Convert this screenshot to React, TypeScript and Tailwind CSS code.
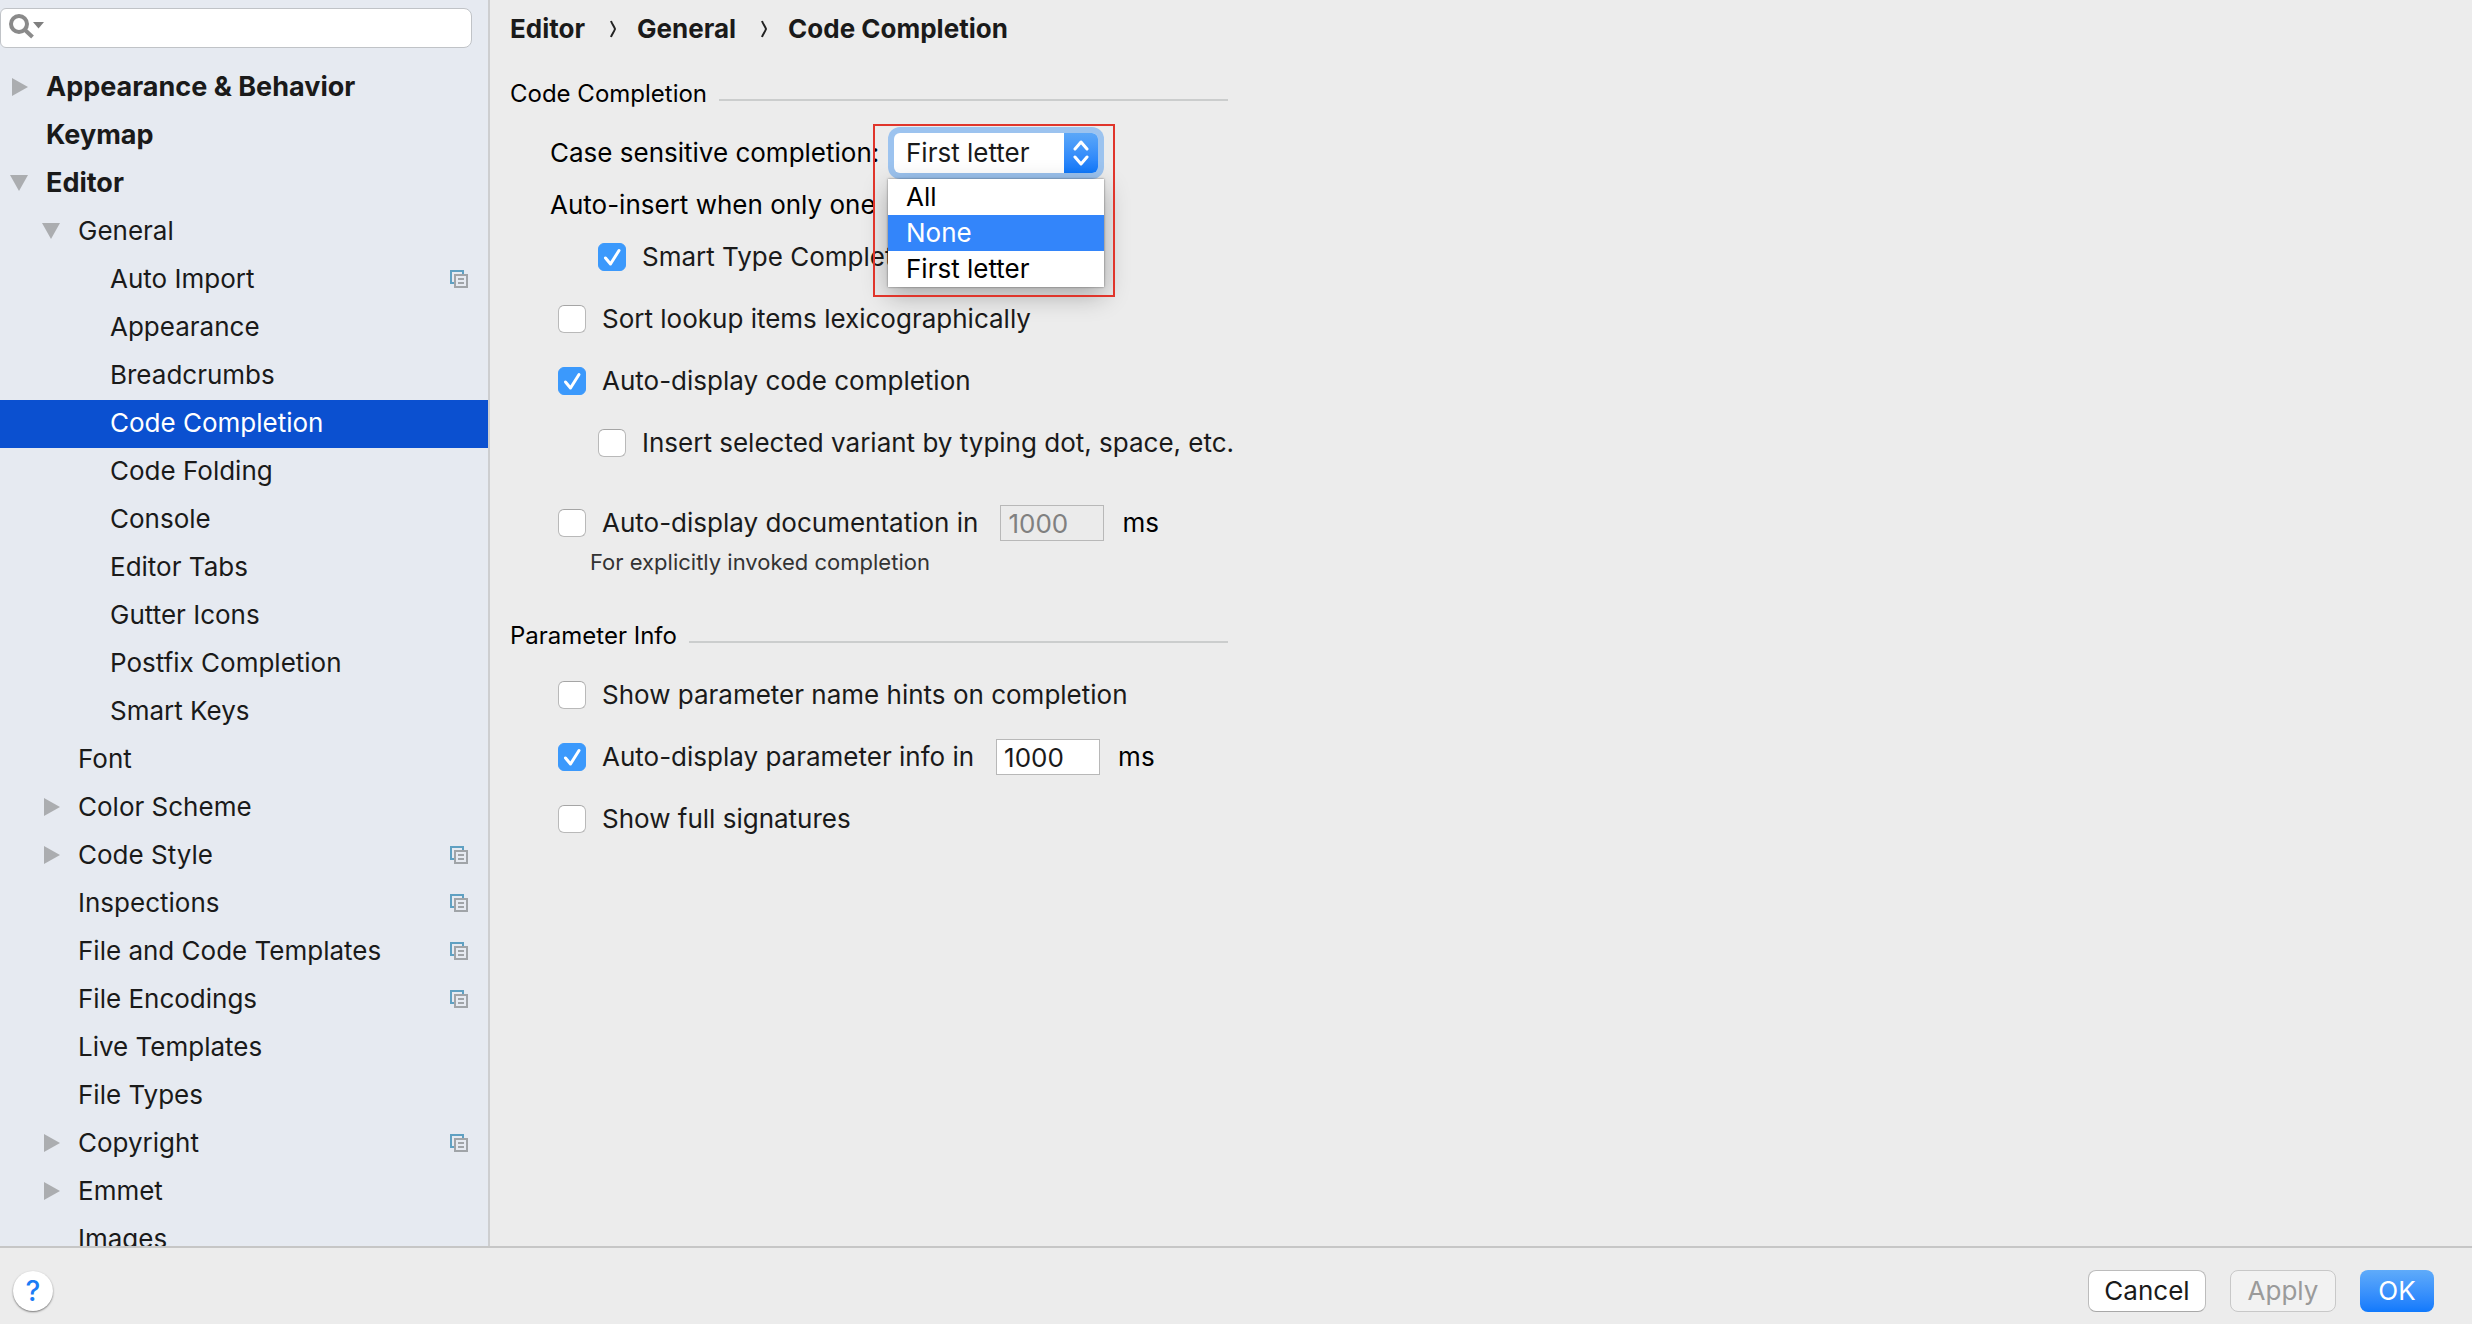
import { useState } from 'react'

type Item = {
  label: string
  level: 0 | 1 | 2
  arrow?: 'open' | 'closed'
  project?: boolean
}

const items: Item[] = [
  { label: 'Appearance & Behavior', level: 0, arrow: 'closed' },
  { label: 'Keymap', level: 0 },
  { label: 'Editor', level: 0, arrow: 'open' },
  { label: 'General', level: 1, arrow: 'open' },
  { label: 'Auto Import', level: 2, project: true },
  { label: 'Appearance', level: 2 },
  { label: 'Breadcrumbs', level: 2 },
  { label: 'Code Completion', level: 2 },
  { label: 'Code Folding', level: 2 },
  { label: 'Console', level: 2 },
  { label: 'Editor Tabs', level: 2 },
  { label: 'Gutter Icons', level: 2 },
  { label: 'Postfix Completion', level: 2 },
  { label: 'Smart Keys', level: 2 },
  { label: 'Font', level: 1 },
  { label: 'Color Scheme', level: 1, arrow: 'closed' },
  { label: 'Code Style', level: 1, arrow: 'closed', project: true },
  { label: 'Inspections', level: 1, project: true },
  { label: 'File and Code Templates', level: 1, project: true },
  { label: 'File Encodings', level: 1, project: true },
  { label: 'Live Templates', level: 1 },
  { label: 'File Types', level: 1 },
  { label: 'Copyright', level: 1, arrow: 'closed', project: true },
  { label: 'Emmet', level: 1, arrow: 'closed' },
  { label: 'Images', level: 1 },
]

const indents = ['pl-2.5 text-[27px] font-bold', 'pl-[42px]', 'pl-[74px]']

const caseOptions = ['All', 'None', 'First letter']

export default function App() {
  return (
    <div className="flex h-screen flex-col bg-[#ececec] font-['Inter',sans-serif] text-[26px] leading-8 text-[#1a1a1a]">
      <div className="flex min-h-0 flex-1">
        <Sidebar />
        <main className="min-w-0 flex-1 overflow-hidden pl-5">
          <Breadcrumbs path={['Editor', 'General', 'Code Completion']} />

          <SectionTitle title="Code Completion" />
          <div className="pt-[15px] pl-10">
            <CaseSelect />
            <div className="flex h-[52px] items-center whitespace-nowrap text-black">Auto-insert when only one</div>
            <div className="flex h-[52px] items-center pl-12">
              <Check id="smart" label="Smart Type Completion" checked />
            </div>
            <div className="pt-[5px] pl-2">
              <Row><Check id="sort" label="Sort lookup items lexicographically" /></Row>
              <Row><Check id="auto-code" label="Auto-display code completion" checked /></Row>
              <div className="pl-10">
                <Row><Check id="insert" label="Insert selected variant by typing dot, space, etc." /></Row>
              </div>
              <div className="pt-[18px]">
                <Row>
                  <Check id="auto-doc" label="Auto-display documentation in" />
                  <Delay label="Documentation delay" disabled />
                </Row>
              </div>
              <p className="-mt-2 pl-8 text-[22px] leading-8 text-[#333]">For explicitly invoked completion</p>
            </div>
          </div>

          <div className="pt-[22px]">
            <SectionTitle title="Parameter Info" />
          </div>
          <div className="pt-2.5 pl-12">
            <Row><Check id="hints" label="Show parameter name hints on completion" /></Row>
            <Row>
              <Check id="auto-param" label="Auto-display parameter info in" checked />
              <Delay label="Parameter info delay" />
            </Row>
            <Row><Check id="full" label="Show full signatures" /></Row>
          </div>
        </main>
      </div>
      <Footer />
    </div>
  )
}

function Sidebar() {
  return (
    <aside className="flex w-[490px] shrink-0 flex-col border-r-2 border-[#cdced0] bg-[#e6eaf1]">
      <div className="pt-2 pr-4 pb-4">
        <div className="flex h-10 items-center rounded-r-lg rounded-l-md border border-[#c0c3c7] bg-white pl-[7px]">
          <SearchIcon className="h-7 w-10 shrink-0" />
          <input type="text" aria-label="Search settings" className="min-w-0 flex-1 bg-transparent outline-none" />
        </div>
      </div>
      <nav className="min-h-0 flex-1 overflow-hidden">
        <ul>
          {items.map((item) => (
            <li key={item.label + item.level}>
              <a
                href="#"
                className={`flex h-12 items-center pr-5 pb-0.5 ${indents[item.level]} ${
                  item.label === 'Code Completion' ? 'bg-[#0b50d0] text-white' : ''
                }`}
              >
                <span className="w-9 shrink-0">
                  {item.arrow && <Arrow open={item.arrow === 'open'} />}
                </span>
                <span className="flex-1 whitespace-nowrap">{item.label}</span>
                {item.project && <ProjectIcon className="size-[18px]" />}
              </a>
            </li>
          ))}
        </ul>
      </nav>
    </aside>
  )
}

function Breadcrumbs({ path }: { path: string[] }) {
  return (
    <h1 className="flex h-[58px] items-center font-bold">
      {path.map((part, i) => (
        <span key={part} className="flex items-center">
          {i > 0 && (
            <svg viewBox="0 0 8 18" className="mr-5 ml-6 h-[18px] w-2" fill="none" stroke="#222" strokeWidth="2">
              <path d="M2 1c1 3 3 5 4 8c-1 3-3 5-4 8" />
            </svg>
          )}
          {part}
        </span>
      ))}
    </h1>
  )
}

function SectionTitle({ title }: { title: string }) {
  return (
    <div className="flex w-[718px] items-center pt-[18px] text-black">
      <h2 className="text-[24px] leading-9">{title}</h2>
      <div className="mt-3 ml-3 h-0.5 flex-1 bg-[#cbcdcd]" />
    </div>
  )
}

function Row({ children }: { children: React.ReactNode }) {
  return <div className="flex h-[62px] items-center">{children}</div>
}

function CaseSelect() {
  const [value, setValue] = useState('First letter')
  return (
    <div className="flex h-[52px] items-center text-black">
      <label htmlFor="case" className="w-[338px] shrink-0 whitespace-nowrap">Case sensitive completion:</label>
      <div className="relative w-[216px]">
        <div className="flex h-[52px] rounded-xl bg-[#9cc3ef] p-1.5">
          <div className="flex flex-1 overflow-hidden rounded-md bg-white">
            <select
              id="case"
              value={value}
              onChange={(e) => setValue(e.target.value)}
              className="h-10 min-w-0 flex-1 appearance-none pl-3 text-[#1a1a1a] outline-none"
            >
              {caseOptions.map((o) => (
                <option key={o}>{o}</option>
              ))}
            </select>
            <span className="flex w-[34px] items-center justify-center bg-linear-to-b from-[#5ba7f8] to-[#0d78fb]">
              <svg viewBox="0 0 16 26" className="h-[26px] w-4" fill="none" stroke="white" strokeWidth="3" strokeLinecap="round" strokeLinejoin="round">
                <path d="M2 9l6-7 6 7M2 17l6 7 6-7" />
              </svg>
            </span>
          </div>
        </div>
        {/* opened list */}
        <ul role="listbox" aria-label="Case sensitive completion" className="absolute top-[52px] left-0 z-10 w-full bg-white shadow-[0_0_2px_rgba(0,0,0,0.5),0_8px_24px_rgba(0,0,0,0.3)]">
          {caseOptions.map((o) => (
            <li
              key={o}
              role="option"
              aria-selected={o === 'None'}
              onClick={() => setValue(o)}
              className={`flex h-9 items-center pl-[18px] ${o === 'None' ? 'bg-[#3385fa] text-white' : ''}`}
            >
              {o}
            </li>
          ))}
        </ul>
        <div className="pointer-events-none absolute -top-[3px] -left-[15px] z-20 h-[173px] w-[242px] border-2 border-[#e0352b]" />
      </div>
    </div>
  )
}

function Check({ id, label, checked = false }: { id: string; label: string; checked?: boolean }) {
  return (
    <div className="flex items-center">
      <span className="grid size-7 shrink-0">
        <input
          id={id}
          type="checkbox"
          defaultChecked={checked}
          className="peer col-start-1 row-start-1 size-7 appearance-none rounded-md border border-[#b9b9b9] border-t-[#a5a5a5] bg-white checked:border-[#3b99fc] checked:bg-[#3b99fc]"
        />
        <svg
          viewBox="0 0 28 28"
          className="pointer-events-none invisible col-start-1 row-start-1 size-7 peer-checked:visible"
          fill="none"
          stroke="white"
          strokeWidth="3"
          strokeLinecap="round"
          strokeLinejoin="round"
        >
          <path d="M7.500 15l5 6L21 7.500" />
        </svg>
      </span>
      <label htmlFor={id} className="pl-4 whitespace-nowrap">{label}</label>
    </div>
  )
}

function Delay({ label, disabled }: { label: string; disabled?: boolean }) {
  return (
    <label className="flex items-center pl-[22px] text-black">
      <input
        type="text"
        aria-label={label}
        defaultValue="1000"
        disabled={disabled}
        className="mr-[18px] h-9 w-[104px] border border-[#b8b8b8] bg-white px-[7px] text-[#1a1a1a] outline-none disabled:bg-[#ebebeb] disabled:text-[#808080]"
      />
      ms
    </label>
  )
}

function Footer() {
  return (
    <footer className="flex h-[78px] shrink-0 items-center border-t-2 border-[#c6c6c6] pt-2.5 pr-[38px] pl-[13px]">
      <button aria-label="Help" className="flex size-10 items-center justify-center rounded-full bg-white text-[28px] font-medium text-[#1a7cf5] shadow-[0_1px_2px_rgba(0,0,0,0.5)]">
        ?
      </button>
      <div className="ml-auto flex gap-6">
        <button className="h-[42px] w-[118px] rounded-lg border border-[#bcbcbc] border-b-[#a8a8a8] bg-white">Cancel</button>
        <button disabled className="h-[42px] w-[106px] rounded-lg border border-[#c8c8c8] bg-[#f2f2f2] text-[#9a9a9a]">Apply</button>
        <button className="h-[42px] w-[74px] rounded-lg bg-linear-to-b from-[#5fabfa] to-[#0f79fc] text-white">OK</button>
      </div>
    </footer>
  )
}

function Arrow({ open }: { open: boolean }) {
  return (
    <svg viewBox="0 0 18 18" className="size-[18px]" fill="#abadb0">
      {open ? <path d="M0 1h18L9 17z" /> : <path d="M2 0v18l16-9z" />}
    </svg>
  )
}

function SearchIcon(props: React.SVGProps<SVGSVGElement>) {
  return (
    <svg {...props} viewBox="0 0 40 28" fill="none">
      <circle cx="11" cy="10" r="8" stroke="#8a8a8a" strokeWidth="4" />
      <path d="M16.500 15.500l8 7.500" stroke="#8a8a8a" strokeWidth="4" />
      <path d="M25 8h11l-5.500 6.500z" fill="#7f7f7f" />
    </svg>
  )
}

// marks settings that are stored per project
function ProjectIcon(props: React.SVGProps<SVGSVGElement>) {
  return (
    <svg {...props} viewBox="0 0 18 18" fill="none" strokeWidth="2">
      <path d="M4 13H1V1h12v3" stroke="#5fa0c2" />
      <path d="M5 5h12v12H5z" stroke="#a0a4a8" />
      <path d="M8 9h6M8 13h6" stroke="#a0a4a8" />
    </svg>
  )
}
